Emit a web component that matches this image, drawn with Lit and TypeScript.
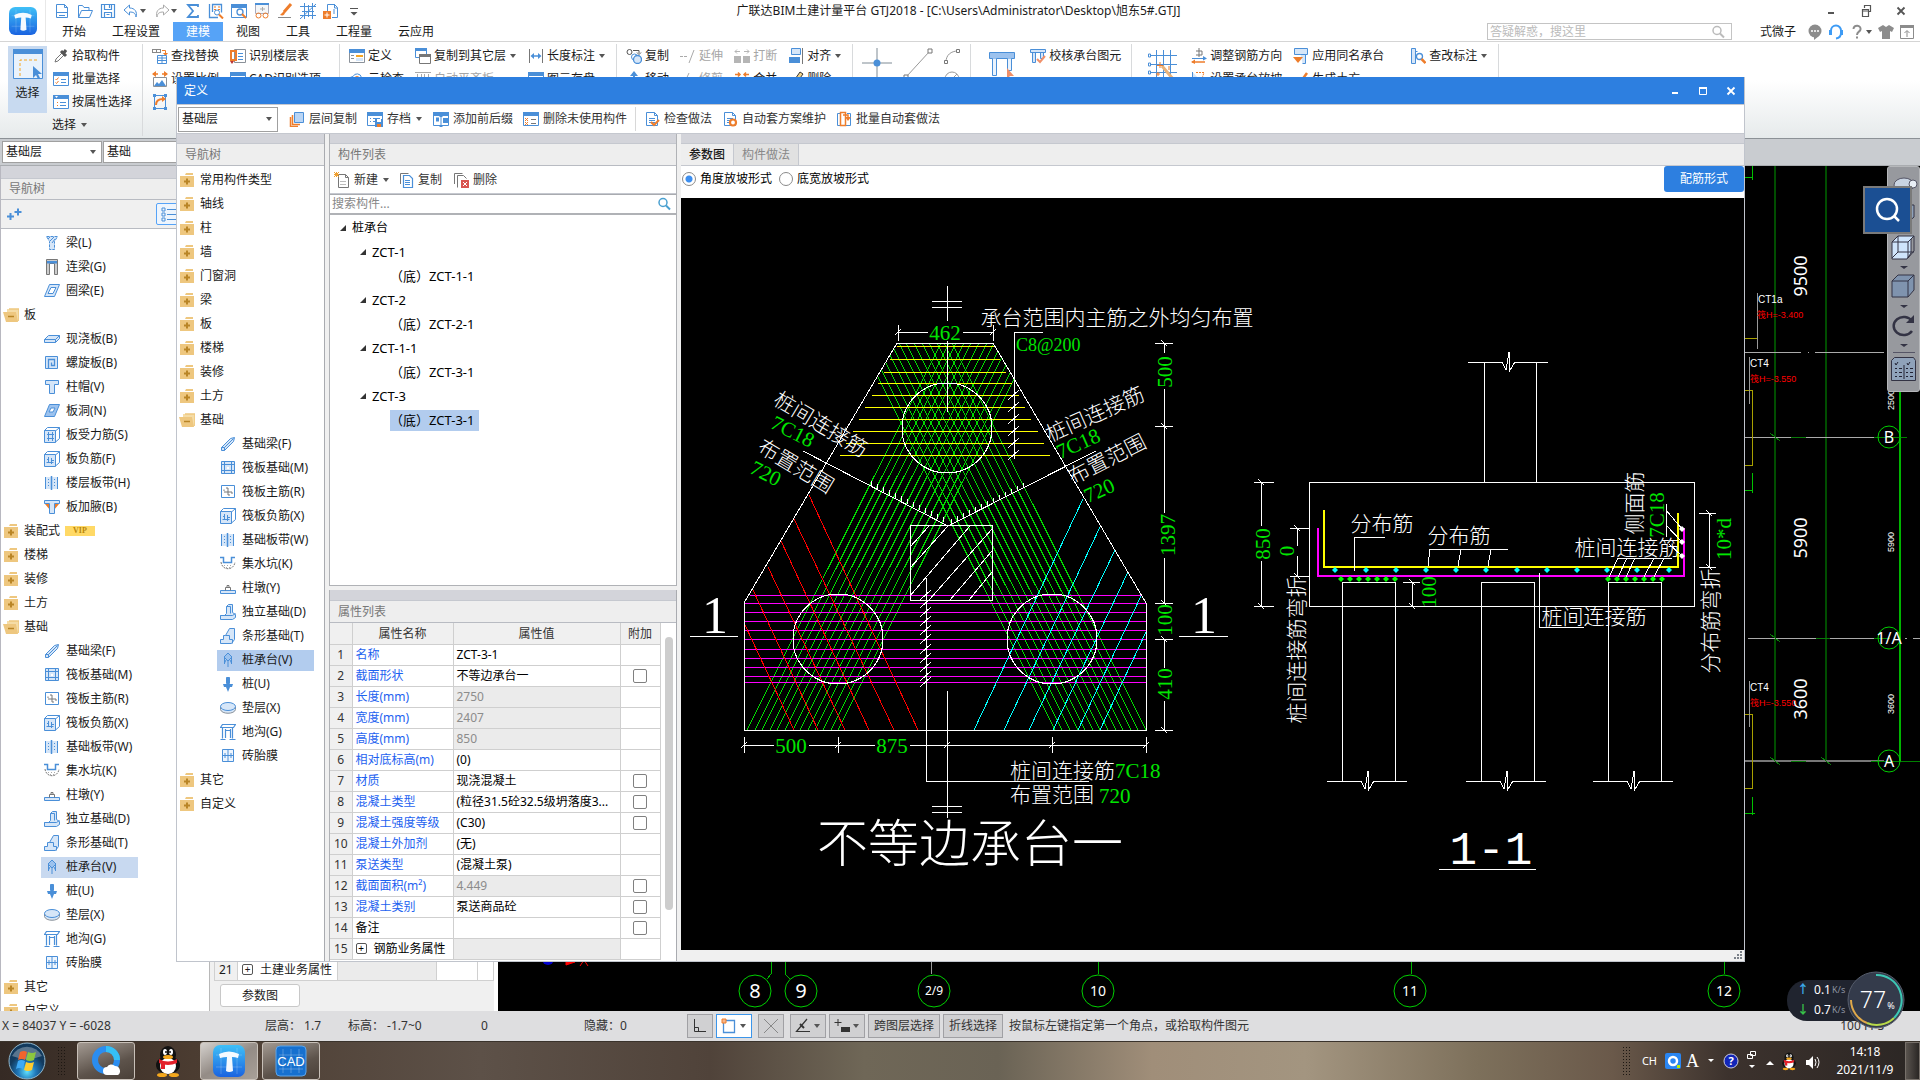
import { LitElement, html, svg, css, nothing } from "lit";
import { customElement } from "lit/decorators.js";
import { classMap } from "lit/directives/class-map.js";

const B = "#4a8fd8";
const L = "#d6e6f8";
const O = "#ee7d2b";
const G = "#8a9199";

/* ---------- icon set, 16 x 16 ---------- */
const win = svg`<path d="M.5 1.5h15v13H.5z" fill="#fff" stroke="#4a8fd8"/><path d="M0 1h16v4H0z" fill="#4a8fd8"/>`;
const folder = svg`<path d="M1 4h14v11H1z" fill="#eec77f"/><path d="M7 1h7v2H6z" fill="#eec77f"/>`;
const box3d = svg`<path d="M.5 3.5h11v12H.5z" fill=${L} stroke=${B}/><path d="M.5 3.5l3-3h12v11l-4 3.500v-11l4-3.500" fill="none" stroke=${B}/>`;
const page = svg`<path d="M2.500 1.500h8l3 3v10h-11z" fill="#fff" stroke="#4a8fd8"/><path d="M10.500 1.500v3h3M5 7.500h6M5 9.500h6M5 11.500h6" fill="none" stroke="#4a8fd8"/>`;
const cap = svg`<path d="M1.500 1.500h13v4h-4v9h-5v-9h-4z" fill=${L} stroke=${B}/>`;

const ICONS: Record<string, unknown> = {
  newdoc: svg`<path d="M2.500 1.500h8l3 3v10h-11zM10.500 1.500v3h3M2.500 9.500h11" fill="none" stroke=${B}/><path d="M5 12.500h6" stroke=${B}/>`,
  open: svg`<path d="M1.500 14.500v-12h4l1.500 2h5v3M1.500 14.500l3-7h11l-3 7z" fill="none" stroke=${B}/>`,
  save: svg`<path d="M1.500 1.500h13v13h-13zM4.500 1.500v5h7v-5M4.500 14.500v-5h7v5M9.500 2v3M6.500 11.500h3" fill="none" stroke=${B} stroke-width="1.200"/>`,
  undo: svg`<path d="M6.500 2L1 7l5.500 5V9c4 0 6 1 6.500 5 1.500-5-1-9-6.500-9z" fill="none" stroke=${B}/>`,
  redo: svg`<path d="M9.500 2L15 7l-5.500 5V9c-4 0-6 1-6.500 5C1.500 9 4 5 9.500 5z" fill="none" stroke="#aaa"/>`,
  sigma: svg`<path d="M13 4V2H3l5 6-5 6h10v-2" fill="none" stroke=${B} stroke-width="1.800"/>`,
  chartfind: svg`<path d="M1.500 1v13.500H10M4.500 9V1.500h9v8" fill="none" stroke=${B} stroke-width="1.300"/><path d="M6 4h2M10 4h2M6 6.500h2M10 6.500h2" stroke=${O} stroke-width="1.200"/><circle cx="9" cy="9.500" r="2.500" fill="#fff" stroke=${B}/><path d="M11 11.500l4 4" stroke=${O} stroke-width="2"/>`,
  winfind: svg`${win}<circle cx="9" cy="9" r="3" fill="#fff" stroke=${B} stroke-width="1.300"/><path d="M11 11l4 4" stroke=${O} stroke-width="2"/>`,
  glasses: svg`<path d="M1.500.500h13v10h-13z" fill="#f4f6f8" stroke="#aab"/><path d="M1 0h14v2H1z" fill=${B}/><path d="M6 6h5M8.500 4v4" stroke="#aaa"/><circle cx="4.500" cy="12.500" r="2.500" fill="none" stroke=${O}/><circle cx="11.500" cy="12.500" r="2.500" fill="none" stroke=${O}/>`,
  brush: svg`<path d="M14 1L7 9" stroke=${O} stroke-width="3"/><path d="M7 8l-4 4c3 1 5 0 5-3z" fill=${O}/><path d="M1 14.500h13" stroke="#888"/>`,
  mesh: svg`<path d="M4.500 0v16M12.500 0v16M0 3.500h16M0 12.500h16M8.500 2v12M2 8.500h12M0 16L16 1" fill="none" stroke=${B}/>`,
  calcpage: svg`<path d="M4.500 8V1.500h7l3 3v10H9" fill="none" stroke=${B}/><path d="M11.500 1v4h3" fill="none" stroke=${B}/><path d="M0 8h8v8H0z" fill=${O}/><path d="M4 9.500v5M1.500 12h5" stroke="#fff"/><path d="M11 6v5" stroke=${B}/>`,
  overflow: svg`<path d="M4 5.500h8" stroke="#555"/><path d="M4.500 9h7L8 12.500z" fill="#555"/>`,
  dropper: svg`<path d="M2 14l1-3 6-6 2 2-6 6z" fill="#fff" stroke="#777"/><path d="M8 3l5 5M10 6l3-4" stroke="#555" stroke-width="3"/>`,
  batch: svg`${win}<path d="M2.500 8l1 1 2-2.500M2.500 11.500l1 1 2-2.500" fill="none" stroke=${O}/><path d="M8 8.500h5M8 11.500h5" stroke=${B}/>`,
  byattr: svg`${win}<path d="M2 2l3 0-1.500 2z" fill="#fff"/><path d="M4 8.500h1M4 11.500h1" stroke=${O}/><path d="M7 8.500h6M7 11.500h6" stroke=${B}/>`,
  replace: svg`<path d="M0 1.500h9M0 4.500h9M.500 1v4M4.500 1v4M8.500 1v4" stroke="#888" fill="none"/><path d="M10 2.500h3.500V6" fill="none" stroke=${O}/><path d="M11 5h5l-2.500 3z" fill=${O}/><path d="M5.500 7.500h9v8h-9zM5.500 10h9M5.500 12.500h9M10 7.500v8" fill="#fff" stroke=${B}/>`,
  scale: svg`<path d="M1 3h5M10 3h5" stroke=${O} stroke-width="1.500"/><path d="M4 0L0 3l4 3zM12 0l4 3-4 3z" fill=${O}/><path d="M1.500 6.500h13v9h-13z" fill="#fff" stroke=${G}/><path d="M2 15l3-4 2 2 3-4 4 6z" fill=${B}/>`,
  rotate: svg`<path d="M2.500 1.500h11v13h-11z" fill="none" stroke=${B}/><path d="M1 0h3v3H1zM12 0h3v3h-3zM1 13h3v3H1zM12 13h3v3h-3z" fill=${B}/><path d="M4 11c0-5 4-6 7-6" fill="none" stroke=${O} stroke-width="2"/><path d="M10 2l4 3-4 3z" fill=${O}/>`,
  floortab: svg`<path d="M4.500 1.500h11v13h-11z" fill="#fff" stroke=${G}/><path d="M1 3h5v9H1z" fill="none" stroke=${O} stroke-width="2"/><path d="M8 5.500h5M8 8.500h5M8 11.500h5" stroke=${B}/><path d="M0 13l4 0-2 3z" fill="#b33"/>`,
  cadopt: svg`${win}<path d="M3 8.500h10M3 11.500h10" stroke=${O}/>`,
  define: svg`<path d="M.5 1.500h15v13H.5z" fill="#fff" stroke=${G}/><path d="M0 1h16v4H0z" fill=${B}/><path d="M7 7h7v2H7z" fill="#f5a623"/><path d="M7 10h7v3H7z" fill=${L}/><path d="M2 7.500h3M2 10.500h3" stroke=${G}/>`,
  cloudcheck: svg`<path d="M4 12.500a3.500 3.500 0 010-7 4.500 4.500 0 018.500 1 3 3 0 010 6z" fill="#fff" stroke=${B}/><circle cx="8" cy="8" r="2.500" fill="none" stroke=${O}/>`,
  copyfloor: svg`<path d="M.5.5h11v9H.5z" fill="#fff" stroke=${B}/><path d="M0 0h12v3H0z" fill=${B}/><path d="M4.500 6.500h11v9h-11z" fill="#fff" stroke="#777"/><path d="M4 6h12v3H4z" fill="#777"/>`,
  flush: svg`<path d="M0 1.500h16M2.500 3v11h4V3M9.500 3v11h4V3" fill="none" stroke="#aaa"/>`,
  length: svg`<path d="M1.500 1v14M14.500 1v14" stroke="#777"/><path d="M4 8h8" stroke=${B} stroke-width="1.500"/><path d="M6 5L2.500 8 6 11zM10 5l3.500 3-3.500 3z" fill=${B}/>`,
  store: svg`${win}<path d="M6 8h8v7H6z" fill=${B}/><path d="M8 8v3h4V8" fill="#fff"/>`,
  copy2: svg`<circle cx="3.500" cy="4" r="2.500" fill="#fff" stroke="#555"/><path d="M7 2.500h6V5M11 4.500l2 2 2-2" fill="none" stroke="#555"/><circle cx="8.500" cy="9" r="3" fill="#fff" stroke=${B}/><circle cx="11.500" cy="11.500" r="4" fill=${L} stroke=${B} stroke-width="1.300"/>`,
  move: svg`<path d="M8 1v9" stroke=${B} stroke-width="2"/><path d="M4 5l4-5 4 5z" fill=${B}/><path d="M1.500 8v6.500h13V8" fill="none" stroke=${B}/>`,
  extend: svg`<path d="M0 8.500h8" stroke="#aaa" stroke-dasharray="3 1"/><path d="M14 2L9 15" stroke="#aaa"/>`,
  trim: svg`<path d="M9 2L3 15M9 9l6 1" stroke="#aaa"/>`,
  break: svg`<path d="M0 8h7v7H0zM9 8h7v7H9z" fill="#b5b5b5"/><path d="M1 3.500h5M10 3.500h5M3 1.500l-2 2 2 2M13 1.500l2 2-2 2" fill="none" stroke="#b5b5b5"/>`,
  merge: svg`<path d="M1 3.500h5M10 3.500h5M4 1.500l2 2-2 2M12 1.500l-2 2 2 2" fill="none" stroke=${O} stroke-width="1.500"/><path d="M0 8h16v7H0z" fill="#777"/>`,
  align: svg`<path d="M3.500.500h9v6h-9z" fill=${L} stroke=${B}/><path d="M1 9h11v6H1z" fill=${B}/><path d="M14.500 0v16" stroke="#777"/>`,
  erase: svg`<path d="M3 14L12 1l3 2-8 11z" fill="#f4d58a" stroke="#333"/>`,
  checkcap: svg`<path d="M.5 1.500h15v3H.5zM2.500 4.500v10h3v-10M10.500 4.500v6h3v-6" fill=${L} stroke=${B}/><path d="M7 11l3 3 5-6" fill="none" stroke="#f0906a" stroke-width="2"/>`,
  rebardir: svg`<path d="M8 0v9M5 3h6v4H5" fill="none" stroke="#777"/><path d="M1 10.500h14" stroke=${B}/><path d="M1 14h13" stroke=${O} stroke-width="1.500"/><path d="M4 11.500L0 14l4 2z" fill=${O}/><path d="M12 8l4 2.500-4 2" fill=${B}/>`,
  slope: svg`<path d="M1.500 1v6h4v8h9" fill=${L} stroke=${B}/><path d="M5 1.500h8l-2 6" fill="none" stroke=${O} stroke-dasharray="2 1"/>`,
  samecap: svg`<path d="M1.500.500h13v6h-13z" fill=${L} stroke=${B}/><path d="M7.500 6.500h5v9h-3" fill=${L} stroke=${B}/><path d="M0 9h10l-5 6z" fill=${O}/>`,
  earth: svg`<path d="M2 8l4 5 8-11" fill="none" stroke=${O} stroke-width="2.500"/>`,
  annotate: svg`<path d="M1.500.500h4v15h-4zM5.500 3.500h2" fill=${L} stroke=${B}/><circle cx="9.500" cy="8.500" r="3" fill="#fff" stroke=${B} stroke-width="1.300"/><path d="M11.500 11l4 4" stroke=${O} stroke-width="2.500"/>`,
  copyfl: svg`<path d="M5.500 1.500h9v10h-9z" fill="#b9d5f5" stroke=${B}/><path d="M3.500 4v9.500H11M1.500 6v9.500H9" fill="none" stroke=${O} stroke-width="1.500"/>`,
  archive: svg`${win}<path d="M3 7.500h1M6 7.500h7M3 10.500h1M6 10.500h4" stroke=${B}/><path d="M8 8h8v8H8z" fill=${B}/><path d="M10 8h4v3h-4z" fill="#fff"/><path d="M10 13h4v3h-4z" fill=${O}/>`,
  prefix: svg`${win}<path d="M3 6.500h3v4H3zM10 7h5v5h-5z" fill=${B}/><path d="M8 5v11M6.500 5.500h3M6.500 15.500h3" stroke=${B}/>`,
  delunused: svg`${win}<path d="M2 7l3 3M5 7l-3 3M2 11l3 3M5 11l-3 3" stroke=${O}/><path d="M8 8.500h5M8 12.500h5" stroke="#777"/>`,
  checkdo: svg`${page}<path d="M7 11l3 3 5-5" fill="none" stroke=${O} stroke-width="2"/>`,
  autoset: svg`${page}<circle cx="11" cy="11.500" r="3" fill="#fff" stroke=${O} stroke-width="2.200"/>`,
  batchdo: svg`<path d="M5.500 2.500h-4v12h4M11 2.500h3.500v12H9" fill="none" stroke=${B}/><path d="M4.500 1.500h5v13h-5z" fill="#fff" stroke=${O} stroke-width="1.500"/><path d="M7 4h5v3" fill="none" stroke=${O} stroke-width="1.500"/><path d="M9 6h6l-3 4z" fill=${O}/>`,
  create: svg`<path d="M4.500 2.500h7l3 3v10h-10z" fill="#fff" stroke="#777"/><path d="M11.500 2.500v3h3" fill="none" stroke="#777"/><path d="M6 9.500h6M6 12.500h6" stroke="#bbb"/><path d="M0 0l5 5M5 0L0 5M2.500 0v5M0 2.500h5" stroke="#f0a030"/>`,
  copy: svg`<path d="M2.500 12V1.500h8" fill="none" stroke="#777"/><path d="M5.500 3.500h6l3 3v9h-9z" fill="#fff" stroke=${B} stroke-width="1.200"/><path d="M7 8.500h5M7 10.500h5M7 12.500h5" stroke=${B}/>`,
  remove: svg`<path d="M1.500 12V1.500h8M4.500 15.500v-12h6l3 3" fill="none" stroke="#777"/><path d="M8 8h8v8H8z" fill="#d9534f"/><path d="M10 10l4 4M14 10l-4 4" stroke="#fff"/>`,
  plusdir: svg`${folder}<path d="M8 6.500v6M5 9.500h6" stroke="#b98526" stroke-width="2"/>`,
  minusdir: svg`<path d="M4 2h12v12H4z" fill="#f5dca6"/><path d="M6 2h10v12" fill="none" stroke="#eec77f" stroke-width="1.500"/><path d="M0 5h13l2 10H3z" fill="#eec77f"/><path d="M5 9.500h6" stroke="#b98526" stroke-width="1.500"/>`,
  beam: svg`<path d="M2.500 1.500h11l-3 5v8h-5v-8z" fill=${L} stroke=${B} stroke-dasharray="3 1"/><path d="M4 4L6 2M6 6l4-4M8 8l3-4" stroke=${B}/>`,
  linkbeam: svg`<path d="M2.500 15.500V.500h11v15h-3v-11h-5v11z" fill="#ccc" stroke="#777"/><path d="M3 2h10v2.500H3z" fill=${B}/>`,
  ring: svg`<path d="M5.500 1.500h10l-5 12H.500z" fill=${L} stroke=${B}/><path d="M7 4.500h5l-3 6H4z" fill="#fff" stroke=${B}/>`,
  slab: svg`<path d="M.5 8.500l4-4h11v3l-4 4H.500z" fill=${L} stroke=${B}/><path d="M.5 8.500h11l4-4M11.500 8.500v3" fill="none" stroke=${B}/>`,
  spiral: svg`<path d="M1.500 1.500h12v12h-12z" fill=${L} stroke=${B}/><path d="M4.500 13V4.500h6v6h-3v-3" fill="none" stroke=${B} stroke-width="1.300"/>`,
  colcap: cap,
  hole: svg`<path d="M5.500 1.500h10l-5 12H.500z" fill="#9cc2ee" stroke=${B}/><path d="M7 5h4l-2 4H5z" fill="#fff" stroke=${B}/>`,
  rebar: svg`${box3d}<path d="M3 7.500h7M3 11.500h7M4.500 5v9M8.500 5v9" stroke=${B}/>`,
  negbar: svg`${box3d}<path d="M2.500 11.500h7M4.500 6v6M7.500 7v6M3 8.500h2M7 9.500h3" fill="none" stroke=${B}/>`,
  strip: svg`<path d="M1 2h13v12H1z" fill=${L}/><path d="M1.500 2v12M13.500 2v12" stroke=${B}/><path d="M7.500 1v14" stroke=${B} stroke-width="1.500"/><path d="M4.500 4v9M10.500 4v9" stroke=${B} stroke-dasharray="1 2"/>`,
  haunch: svg`<path d="M1 5l4 0 1 6zM15 5l-4 0-1 6z" fill=${O}/><path d="M.5 1.500h15v3h-5v10h-5v-10h-5z" fill=${L} stroke=${B}/>`,
  fbeam: svg`<path d="M1.500 11.500l9-9 4-1-1 4-9 9h-3z" fill=${L} stroke=${B}/><path d="M1.500 11.500h3v3M4.500 11.500l9-9" fill="none" stroke=${B}/>`,
  raft: svg`<path d="M1.500 1.500h13v12h-13zM4.500 4.500h7v6h-7zM1 4.500h14M1 10.500h14M4.500 1v13M11.500 1v13" fill=${L} stroke=${B}/><path d="M7 7h2v2H7z" fill="#fff"/>`,
  raftbar: svg`<path d="M1.500 1.500h13v12h-13z" fill="#fff" stroke=${B}/><path d="M4 8h8M8 4v7M6 4h2M8 11h2M4 7v-1.500M12 8v2" stroke="#777" fill="none"/>`,
  sump: svg`<path d="M0 1.500h3.500v5h8v-5H15" fill="none" stroke=${B} stroke-width="1.500"/><path d="M1 6c1 9 13 9 14 0" fill="none" stroke="#777" stroke-dasharray="2 1"/><path d="M4 9.500h7M6 11.500h4" stroke="#aaa" stroke-dasharray="1 2"/>`,
  pier: svg`<path d="M.5 10.500h15v3H.500z" fill=${L} stroke=${B}/><path d="M5.500 10.500v-3h5v3M7 7V5.500h2V7" fill="none" stroke="#777"/>`,
  isolated: svg`<path d="M6.500 9.500v-7l2-2h4v8l3 2v3l-3 2H.500v-4h4z" fill=${L} stroke=${B}/><path d="M.5 11.500h12l3-2M6.500 2.500h4v7" fill="none" stroke=${B}/>`,
  stripf: svg`<path d="M.5 15.500v-4h3v-4h2l4-7h5v11l-3 4z" fill=${L} stroke=${B}/><path d="M5.500 7.500h4v4h3v4" fill="none" stroke=${B}/>`,
  pilecap: svg`<path d="M8 1l4 4-4 4-4-4z" fill="#9cc2ee" stroke=${B}/><path d="M4.500 6v6M8 9v6M11.500 6v6M6 8l-1.500 3M10 8l1.500 3" stroke=${B}/>`,
  pile: svg`<path d="M6.500 1.500h3v6h-3z" fill=${B} stroke=${B}/><path d="M3 8h10l-1 3H4z" fill=${B}/><path d="M6 11h4l-2 5z" fill=${B}/>`,
  cushion: svg`<path d="M.5 6.500v3c1 5 14 5 15 0v-3" fill=${L} stroke=${G}/><ellipse cx="8" cy="6.500" rx="7.500" ry="4" fill=${L} stroke=${B}/>`,
  trench: svg`<path d="M2.500.500h13l-2 3h-13zM2.500 3.500v11M12.500 3.500v11M5.500 5v9M10.500 5v9M.500 15.500h5M9.500 15.500h6M5 6.500h5" fill="none" stroke=${B} stroke-width="1.200"/>`,
  brick: svg`<path d="M2.500 1.500h11v12h-11z" fill="#eef5fd" stroke=${B}/><path d="M8 1.500v12M2.500 7.500h11M5 5v5M11 5v5" stroke=${B}/>`,
  search: svg`<circle cx="7" cy="6.500" r="4" fill="none" stroke="currentColor" stroke-width="1.500"/><path d="M10 9.500l4 4" stroke="currentColor" stroke-width="2"/>`,
  pluses: svg`<path d="M3.500 7v7M0 10.500h7M11 2.500v7M7.500 6h7" stroke=${B} stroke-width="2"/>`,
  listview: svg`<path d="M1 2h3v3H1zM1 7h3v3H1zM1 12h3v3H1z" fill="none" stroke=${B}/><path d="M6 3.500h9M6 8.500h9M6 13.500h9" stroke=${B}/>`,
  ortho: svg`<path d="M2.500 1v12.500H14M2.500 9.500h4v4" fill="none" stroke="#333"/>`,
  snaprect: svg`<path d="M2.500 2.500h11v12h-11z" fill="#fff" stroke=${B} stroke-width="1.300"/><path d="M1 1h4v4H1z" fill="#f6b58a" stroke=${O}/>`,
  cross: svg`<path d="M1 1l14 14M15 1L1 15" stroke="#888"/>`,
  angle: svg`<path d="M15 13.500H1.500L12 1" fill="none" stroke="#333" stroke-width="1.200"/><path d="M5 6l4 4" stroke="#333" stroke-width="2"/>`,
  plusbar: svg`<path d="M4 1v7M.500 4.500h7" stroke="#333"/><path d="M7 9h9v5H7z" fill="#333"/>`,
  chat: svg`<circle cx="8" cy="7" r="6.500" fill="#8c8c8c"/><path d="M7 12h5l-5 4z" fill="#8c8c8c"/><path d="M4 7h2M7 7h2M10 7h2" stroke="#fff" stroke-width="1.500"/>`,
  headset: svg`<path d="M3 8V6.500a5 5 0 0110 0V9c0 3-2 5-5 5.500" fill="none" stroke="#3d9bf5" stroke-width="2"/><path d="M1 6h3v5H1zM12 6h3v5h-3z" fill="#3d9bf5"/>`,
  help: svg`<path d="M4.500 5c0-5 8-4 7 .500C11 8 8 7.500 8 11" fill="none" stroke="#8c8c8c" stroke-width="2"/><path d="M7 12.500h2v2H7z" fill="#8c8c8c"/>`,
  shirt: svg`<path d="M5 1l3 2 3-2 5 3-2 4-2-1v8H4V7L2 8 0 4z" fill="#8c8c8c"/>`,
  collapse: svg`<path d="M1.500 1.500h13v13h-13z" fill="#fff" stroke="#8c8c8c"/><path d="M1 1h14v3H1z" fill="#8c8c8c"/><path d="M8 13V7M5.500 9L8 6.500 10.500 9" fill="none" stroke="#8c8c8c"/>`,
  min: svg`<path d="M5 10h6" stroke="currentColor" stroke-width="2"/>`,
  max: svg`<path d="M4.500 4.500h7v7h-7z" fill="none" stroke="currentColor"/><path d="M4 5h8" stroke="currentColor" stroke-width="2"/>`,
  restore: svg`<path d="M6.500 5V2.500h6v6H10M4.500 6.500h6v7h-6zM4 8h7" fill="none" stroke="currentColor" stroke-width="1.200"/>`,
  close: svg`<path d="M4.500 4.500l7 7M11.500 4.500l-7 7" stroke="currentColor" stroke-width="1.800"/>`,
};

const icon = (name: string, cls = "") =>
  html`<svg class="ic ${cls}" viewBox="0 0 16 16" aria-hidden="true">${ICONS[name]}</svg>`;
const caret = html`<svg class="caret" viewBox="0 0 8 8" aria-hidden="true"><path d="M1 2h6L4 6z" fill="#555"/></svg>`;

/* ---------- data ---------- */
type Cmd = [string, string, string?];
const G1: Cmd[][] = [[["dropper", "拾取构件"], ["batch", "批量选择"], ["byattr", "按属性选择"]]];
const G2: Cmd[][] = [
  [["replace", "查找替换"], ["scale", "设置比例"], ["rotate", ""]],
  [["floortab", "识别楼层表"], ["cadopt", "CAD识别选项"]],
];
const G3: Cmd[][] = [
  [["define", "定义"], ["cloudcheck", "云检查"]],
  [["copyfloor", "复制到其它层", "v"], ["flush", "自动平齐板", "off"]],
  [["length", "长度标注", "v"], ["store", "图元存盘"]],
];
const G4: Cmd[][] = [
  [["copy2", "复制"], ["move", "移动"]],
  [["extend", "延伸", "off"], ["trim", "修剪", "off"]],
  [["break", "打断", "off"], ["merge", "合并"]],
  [["align", "对齐", "v"], ["erase", "删除"]],
];
const G7: Cmd[][] = [
  [["rebardir", "调整钢筋方向"], ["slope", "设置承台放坡"]],
  [["samecap", "应用同名承台"], ["earth", "生成土方"]],
];

const FOUND: [string, string][] = [
  ["fbeam", "基础梁(F)"], ["raft", "筏板基础(M)"], ["raftbar", "筏板主筋(R)"], ["negbar", "筏板负筋(X)"],
  ["strip", "基础板带(W)"], ["sump", "集水坑(K)"], ["pier", "柱墩(Y)"], ["isolated", "独立基础(D)"],
  ["stripf", "条形基础(T)"], ["pilecap", "桩承台(V)"], ["pile", "桩(U)"], ["cushion", "垫层(X)"],
  ["trench", "地沟(G)"], ["brick", "砖胎膜"],
];
const dir = (t: string): [string, string] => ["plusdir", t];
const LEFT_TREE: [string, string][] = [
  ["beam", "梁(L)"], ["linkbeam", "连梁(G)"], ["ring", "圈梁(E)"], ["minusdir", "板"],
  ["slab", "现浇板(B)"], ["spiral", "螺旋板(B)"], ["colcap", "柱帽(V)"], ["hole", "板洞(N)"],
  ["rebar", "板受力筋(S)"], ["negbar", "板负筋(F)"], ["strip", "楼层板带(H)"], ["haunch", "板加腋(B)"],
  dir("装配式"), dir("楼梯"), dir("装修"), dir("土方"), ["minusdir", "基础"], ...FOUND, dir("其它"), dir("自定义"),
];
const DLG_TREE: [string, string][] = [
  ...["常用构件类型", "轴线", "柱", "墙", "门窗洞", "梁", "板", "楼梯", "装修", "土方"].map(dir),
  ["minusdir", "基础"], ...FOUND, dir("其它"), dir("自定义"),
];
const COMPS: [number, string][] = [
  [1, "桩承台"], [2, "ZCT-1"], [3, "（底）ZCT-1-1"], [2, "ZCT-2"], [3, "（底）ZCT-2-1"],
  [2, "ZCT-1-1"], [3, "（底）ZCT-3-1"], [2, "ZCT-3"], [3, "（底）ZCT-3-1"],
];
/* name, value, flags: c = tick box, g = read-only, k = black name, p = expander */
const PROPS: [string, string, string][] = [
  ["名称", "ZCT-3-1", ""], ["截面形状", "不等边承台一", "c"], ["长度(mm)", "2750", "g"], ["宽度(mm)", "2407", "g"],
  ["高度(mm)", "850", "g"], ["相对底标高(m)", "(0)", ""], ["材质", "现浇混凝土", "c"],
  ["混凝土类型", "(粒径31.5砼32.5级坍落度3...", "c"], ["混凝土强度等级", "(C30)", "c"], ["混凝土外加剂", "(无)", ""],
  ["泵送类型", "(混凝土泵)", ""], ["截面面积(m²)", "4.449", "gc"], ["混凝土类别", "泵送商品砼", "c"],
  ["备注", "", "kc"], ["钢筋业务属性", "", "kgp"],
];

/* ---------- drawing helpers ---------- */
const seg = (d: string, stroke = "#fff", w = 1) =>
  svg`<path d=${d} stroke=${stroke} stroke-width=${w} fill="none" shape-rendering="crispEdges"/>`;
const label = (x: number, y: number, t: string, size = 21, rot = 0, fill = "#fff", anchor = "middle", cls = "cad") =>
  svg`<text class=${cls} x=${x} y=${y} dy="0.36em" font-size=${size} fill=${fill} text-anchor=${anchor}
    transform=${rot ? `rotate(${rot} ${x} ${y})` : nothing}>${t}</text>`;
const GR = "#00e600";
const range = (n: number) => Array.from({ length: n }, (_, i) => i);

const YELLOW = [
  [346, 897, 995], [359, 890, 1000], [372, 884, 1006], [383, 878, 1012], [395, 872, 1019],
  [407, 865, 1025], [419, 859, 1031], [431, 853, 1038], [443, 846, 1044], [455, 840, 1050],
];
const MAG = [595, 603, 612, 621, 630, 639, 649, 658, 667, 676, 682];

const planDrawing = () => svg`
  <clipPath id="capshape"><path d="M897 343H993L1146 603V730H744V603z"/></clipPath>
  <g clip-path="url(#capshape)">
    ${range(13).map((i) => seg(`M${747 + Math.round(i * 7.6)} 730l194 -387`, "#00d800"))}
    ${range(13).map((i) => seg(`M${1146 - Math.round(i * 7.6)} 730l-194 -387`, "#00d800"))}
  </g>
  ${YELLOW.map(([y, a, b]) => seg(`M${a} ${y}H${b}`, "#ff0"))}
  ${MAG.map((y, i) => seg(i ? `M744 ${y}H1146` : `M750 ${y}H1141`, "#f0f"))}
  ${seg("M809 495L918 730M794 519L894 730M781 541L869 730M768 567L845 730M753 590L818 730M745 625L794 730", "#f00")}
  ${seg("M1083 499L974 730M1100 527L1004 730M1115 550L1029 730M1128 572L1053 730M1141 596L1078 730M1146 632L1100 730", "#0ff")}
  ${seg("M897 343H993L1146 603V730H744V603z")}
  ${[[947, 428], [838, 639], [1052, 639]].map(([x, y]) => svg`<circle cx=${x} cy=${y} r="45" fill="none" stroke="#fff" shape-rendering="crispEdges"/>`)}
  ${seg("M910 525H992V600H910zM910 547L929 526M910 568L948 526M910 596L970 526M929 600L992 529M950 600L992 551M969 600L992 572")}
  ${seg("M947 286V321M932 301H962M932 307H962M947 341V412M947 691V818M932 806H962M932 812H962")}
  ${seg("M898 332H928M963 332H993M898 325V341M993 325V341M895 335l6 -6M990 335l6 -6")}
  ${seg("M1043 332H1014V459M926 578V781H1089M803 451L948 526L1096 451")}
  ${YELLOW.slice(4).map(([y]) => seg(`M1008 ${y + 5}l11 -10`))}
  ${MAG.map((y) => seg(`M920 ${y + 5}l11 -10`))}
  ${range(13).map((i) => seg(`M${871 + i * 6} ${486 + i * 3}v-5M${1023 - i * 6} ${488 + i * 3}v-5`))}
  ${seg("M1164 343V353M1164 389V513M1164 558V604M1164 639V668M1164 701V730M1155 343H1173M1155 426H1173M1155 603H1173M1155 639H1173M1155 730H1173")}
  ${[343, 426, 603, 639, 730].map((y) => seg(`M1161 ${y - 3}l6 6`))}
  ${seg("M744 745H774M809 745H875M910 745H1146")}
  ${[744, 838, 947, 1052, 1146].map((x) => seg(`M${x} 737V753M${x - 3} 748l6 -6`))}
  ${seg("M690 636H738M1179 636H1228")}
  ${label(945, 332, "462", 21, 0, GR)}
  ${label(1117, 317, "承台范围内主筋之外均匀布置")}
  ${label(1016, 345, "C8@200", 18, 0, GR, "start")}
  ${label(821, 424, "桩间连接筋", 21, 31)}${label(793, 431, "7C18", 21, 27, GR)}
  ${label(796, 466, "布置范围", 21, 31)}${label(766, 473, "720", 21, 27, GR)}
  ${label(1095, 414, "桩间连接筋", 21, -24)}${label(1078, 443, "7C18", 21, -24, GR)}
  ${label(1107, 459, "布置范围", 21, -27)}${label(1099, 490, "720", 21, -24, GR)}
  ${label(1164, 372, "500", 21, -90, GR)}${label(1167, 535, "1397", 21, -90, GR)}
  ${label(1164, 620, "100", 21, -90, GR)}${label(1164, 684, "410", 21, -90, GR)}
  ${label(791, 745, "500", 21, 0, GR)}${label(892, 745, "875", 21, 0, GR)}
  ${label(715, 614, "1", 52)}${label(1204, 614, "1", 52)}
  ${label(1010, 770, "桩间连接筋", 21, 0, "#fff", "start")}${label(1115, 770, "7C18", 21, 0, GR, "start")}
  ${label(1010, 794, "布置范围", 21, 0, "#fff", "start")}${label(1099, 795, "720", 21, 0, GR, "start")}
  ${label(970, 844, "不等边承台一", 51)}`;

const breakLine = (x: number, y: number) => seg(`M${x - 40} ${y}H${x - 6}l4 8l3 -18v20l6 -10H${x + 40}`);
const diamond = (x: number, y: number, c: string) => svg`<path d=${`M${x - 3} ${y}l3 -3l3 3l-3 3z`} fill=${c}/>`;

const sectionDrawing = () => svg`
  ${seg("M1484 362V482M1536 362V482M1309 482H1694V606H1309z")}
  ${breakLine(1508, 362)}
  ${seg("M1342 781V582H1395V781M1481 781V582H1534V781M1608 781V582H1661V781")}
  ${breakLine(1367, 781)}${breakLine(1506, 781)}${breakLine(1633, 781)}
  ${seg("M1324 510V567H1678V513", "#ff0", 2)}
  ${seg("M1318 528V576H1684V528", "#f0f", 2)}
  ${[1335, 1366, 1396, 1426, 1456, 1486, 1517, 1547, 1577, 1607, 1637, 1669].map((x) => diamond(x, 570, "#0ff"))}
  ${range(7).map((i) => [diamond(1341 + i * 9, 579, "#0f0"), diamond(1608 + i * 9, 579, "#0f0")])}
  ${[529, 542, 556].map((y) => diamond(1682, y, "#fff"))}
  ${seg("M1261 482V526M1261 561V606M1254 482H1274M1254 606H1274M1258 479l6 6M1258 603l6 6")}
  ${seg("M1297 528V546M1297 556V576M1290 528H1309M1290 576H1309M1294 525l6 6M1294 573l6 6")}
  ${seg("M1412 582V606M1403 582H1420M1403 606H1420M1409 579l6 6M1409 603l6 6")}
  ${seg("M1709 513V567M1699 513H1716M1699 567H1716M1706 510l6 6M1706 564l6 6")}
  ${seg("M1354 571V537H1385M1428 566L1430 549H1508M1458 566L1461 549M1488 566L1491 549")}
  ${seg("M1666 504V537M1666 510L1682 529M1666 525L1682 542M1669 544L1682 556")}
  ${seg("M1609 577L1618 558H1672M1618 577L1627 558M1626 577L1635 558M1644 577L1654 558M1654 577L1664 558")}
  ${seg("M1539 573V627H1584M1439 869H1536")}
  ${label(1262, 544, "850", 21, -90, GR)}${label(1286, 551, "0", 21, -90, GR)}
  ${label(1428, 592, "100", 21, -90, GR)}${label(1656, 515, "7C18", 21, -90, GR)}${label(1723, 539, "10*d", 21, -90, GR)}
  ${label(1296, 650, "桩间连接筋弯折", 21, -90)}${label(1710, 621, "分布筋弯折", 21, -90)}
  ${label(1634, 503, "侧面筋", 21, -90)}
  ${label(1382, 523, "分布筋")}${label(1459, 535, "分布筋")}
  ${label(1627, 547, "桩间连接筋")}${label(1594, 616, "桩间连接筋")}
  ${label(1491, 847, "1-1", 46, 0, "#fff", "middle", "cadmono")}`;

const axisBubble = (x: number, y: number, r: number, t: string, size: number) => svg`
  <circle cx=${x} cy=${y} r=${r} fill="none" stroke="#00d000"/>
  ${label(x, y, t, size, 0, "#fff", "middle", "axis")}`;

const siteDrawing = () => svg`
  ${seg("M1775 166V761M1826 166V761", "#004d00", 2)}
  ${seg("M1745 352H1801M1808 352h1M1815 352H1884M1745 437H1884M1748 638H1884M1905 638h2M1913 638H1920", "#aaa")}
  ${seg("M1745 761H1884", "#777", 2)}
  ${seg("M1791 437h15M1791 761h15M1816 638h14M1770 433l10 8M1770 634l10 8M1770 757l10 8M1821 757l10 8", "#0a7a0a")}
  ${seg("M1900 166V761", "#00b400", 2)}
  ${seg("M1874 437H1907M1874 638H1890M1871 761H1920", "#008000")}
  ${seg("M1752 166V180M1745 177H1752M1752 473V493M1745 490H1752M1752 797V815M1745 813H1755", "#00c000")}
  ${seg("M1745 338H1757M1745 390H1752V465H1745M1745 714H1752V788H1745", "#a8a000", 1)}
  ${seg("M1757 293V349M1749 357V404M1749 681V727", "#999")}
  ${label(1758, 299, "CT1a", 10, 0, "#fff", "start", "small")}${label(1757, 315, "筏H=-3.400", 9, 0, "#f00", "start", "small")}
  ${label(1750, 363, "CT4", 10, 0, "#fff", "start", "small")}${label(1750, 379, "筏H=-3.550", 9, 0, "#f00", "start", "small")}
  ${label(1750, 687, "CT4", 10, 0, "#fff", "start", "small")}${label(1750, 703, "筏H=-3.550", 9, 0, "#f00", "start", "small")}
  ${label(1801, 276, "9500", 18, -90, "#fff", "middle", "axis")}${label(1801, 538, "5900", 18, -90, "#fff", "middle", "axis")}
  ${label(1801, 699, "3600", 18, -90, "#fff", "middle", "axis")}
  ${label(1891, 400, "2500", 9, -90, "#fff", "middle", "small")}${label(1891, 542, "5900", 9, -90, "#fff", "middle", "small")}
  ${label(1891, 704, "3600", 9, -90, "#fff", "middle", "small")}
  ${axisBubble(1889, 437, 11, "B", 16)}${axisBubble(1889, 638, 11, "1/A", 16)}${axisBubble(1889, 761, 11, "A", 16)}
  ${seg("M771 960V974L767 979M785 960V974L790 979M1098 960V974M1411 960V974M1724 960V974", "#00b400")}
  ${seg("M931 960V974", "#999")}
  ${axisBubble(755, 991, 16, "8", 20)}${axisBubble(801, 991, 16, "9", 20)}${axisBubble(934, 991, 16, "2/9", 12)}
  ${axisBubble(1098, 991, 16, "10", 14)}${axisBubble(1410, 991, 16, "11", 14)}${axisBubble(1724, 991, 16, "12", 14)}
  <circle cx="548" cy="959" r="6" fill="#00c"/>
  <path d="M566 960l9 2-9 3zM584 960l-4 6M584 960l4 6" fill="#f00" stroke="#f00"/>`;

const penguin = (cls: string) => html`<svg class=${cls} viewBox="0 0 28 32" aria-hidden="true">
  <ellipse cx="14" cy="20" rx="12" ry="9" fill="#111"/><ellipse cx="14" cy="10" rx="8" ry="9" fill="#111"/>
  <ellipse cx="14" cy="21" rx="8" ry="8" fill="#fff"/><ellipse cx="8" cy="30" rx="5" ry="2" fill="#f5a81c"/><ellipse cx="20" cy="30" rx="5" ry="2" fill="#f5a81c"/>
  <path d="M5 14q9 5 18 0v4q-9 4-18 0z" fill="#e3202a"/><path d="M7 17h4v7H7z" fill="#e3202a"/>
  <ellipse cx="11" cy="7" rx="2" ry="3" fill="#fff"/><ellipse cx="17" cy="7" rx="2" ry="3" fill="#fff"/><circle cx="12" cy="7" r="1" fill="#111"/><circle cx="16" cy="7" r="1" fill="#111"/>
  <ellipse cx="14" cy="12" rx="5" ry="2" fill="#f5a81c"/></svg>`;

const tLogo = (cls: string) => html`<svg class=${cls} viewBox="0 0 32 32" aria-hidden="true">
  <defs><linearGradient id="tl" x1="0" y1="0" x2="0" y2="1"><stop offset="0" stop-color="#3fc0f7"/><stop offset="1" stop-color="#1a63e0"/></linearGradient></defs>
  <rect width="32" height="32" rx="7" fill="url(#tl)"/><path d="M8 3v26M24 3v26M3 10h26M3 22h26" stroke="#fff" stroke-opacity=".2"/>
  <path d="M6 9q10-5 20 0l-1 4q-3-1-6-1l1 14q-4 2-7 0l1-14q-3 0-7 1z" fill="#fff" fill-opacity=".95"/></svg>`;

@customElement("app-root")
export class AppRoot extends LitElement {
  static styles = css`
    :host { display: block; height: 100vh; overflow: hidden; position: relative; background: #fff; color: #1a1a1a;
      font: 12px/16px "Noto Sans", "Noto Sans CJK SC", sans-serif; }
    * { box-sizing: border-box; }
    button, input, select { font: inherit; color: inherit; margin: 0; padding: 0; border: 0; background: none; border-radius: 0; }
    button { display: flex; align-items: center; white-space: nowrap; }
    ul { list-style: none; margin: 0; padding: 0; }
    .ic { width: 16px; height: 16px; flex: none; display: block; }
    .caret { width: 8px; height: 8px; flex: none; display: block; }
    .shell { display: flex; flex-direction: column; height: 100%; }

    .head { display: flex; height: 42px; flex: none; border-bottom: 1px solid #d5d5d5; }
    .logo { width: 46px; display: flex; align-items: center; justify-content: center; border-right: 1px solid #e8e8e8; }
    .logoimg { width: 28px; height: 28px; }
    .headmain { flex: 1; min-width: 0; display: flex; flex-direction: column; }
    .toprow { display: grid; grid-template-columns: 1fr auto 1fr; height: 22px; align-items: center; padding-right: 11px; }
    .qat { display: flex; gap: 7px; padding-left: 8px; }
    .title { margin: 0; font-size: 12px; font-weight: 400; padding-right: 38px; }
    .wins { display: flex; justify-content: flex-end; gap: 19px; color: #555; }
    .tabrow { display: flex; height: 19px; align-items: center; padding-left: 3px; }
    .tab { height: 19px; padding: 0 13px; }
    .tab.on { background: #56a3f7; color: #fff; }
    .userbar { margin-left: auto; display: flex; align-items: center; gap: 5px; padding-right: 5px; }
    .ask { display: flex; align-items: center; width: 245px; height: 17px; border: 1px solid #c4c4c4; color: #bbb; padding: 0 5px 0 2px; }
    .ask input { flex: 1; min-width: 0; outline: 0; line-height: 14px; }
    .ask input::placeholder, .find input::placeholder { color: #888; opacity: 1; }
    .ask input::placeholder { color: #bbb; }
    .user { padding: 0 6px 0 23px; }

    .ribbon { display: flex; height: 97px; flex: none; padding: 2px 0; background: linear-gradient(#fff 40%, #e6eaeb); border-bottom: 1px solid #8c9196; }
    .group { display: flex; gap: 11px; padding: 0 10px 0 9px; border-right: 1px solid #d8dadc; }
    .group.first { padding-left: 8px; flex-direction: column; gap: 0; }
    .group.spread { padding-right: 18px; }
    .group.inset { padding-left: 16px; }
    .group.inset .bigtop { padding-right: 2px; }
    .firstrow { display: flex; gap: 6px; }
    .gname { justify-content: center; gap: 4px; padding-top: 4px; }
    .col { display: flex; flex-direction: column; }
    .gap { width: 4px; }
    .cmd { height: 23px; gap: 3px; }
    .cmd.off { color: #a6a6a6; }
    .bigsel { flex-direction: column; width: 39px; height: 67px; padding-top: 2px; gap: 5px; background: #c8daf0; margin-top: 2px; }
    .big { width: 30px; height: 32px; display: block; }
    .bigtop { align-self: flex-start; padding-top: 4px; }

    .band { display: flex; height: 27px; flex: none; background: #c9ccd0; border-bottom: 1px solid #a9acb0; padding: 2px; gap: 1px; }
    .sel { position: relative; display: flex; align-items: center; background: #fff; border: 1px solid #a0a0a0; }
    .sel select { appearance: none; width: 100%; height: 100%; padding: 0 16px 0 3px; outline: 0; }
    .sel .caret { position: absolute; right: 4px; pointer-events: none; }
    .sel.wide { width: 100px; }

    .work { flex: 1; min-height: 0; display: flex; background: #f0f0f0; }
    .side { width: 210px; border-right: 1px solid #b8b8b8; display: flex; flex-direction: column; background: #fff; margin-right: 4px; overflow: hidden; border-left: 1px solid #b8b8c0; }
    .strip { height: 12px; background: #d3d4da; flex: none; }
    .strip.thin { height: 9px; }
    .attrs .strip { height: 10px; }
    .phead { height: 22px; flex: none; background: #eee; color: #777; padding-left: 8px; display: flex; align-items: center; border-top: 1px solid #c5c8cf; border-bottom: 1px solid #b8bbc2; margin: 0; font-size: 12px; font-weight: 400; }
    .phead.tall { height: 23px; }
    .tools { display: flex; height: 29px; flex: none; background: #f0f0f0; align-items: center; padding-left: 6px; border-bottom: 1px solid #b8bbc2; }
    .lv { margin-left: 133px; border: 1px solid #56a3f7; border-radius: 2px; padding: 2px 4px; background: #eef5fd; }
    .tree { flex: 1; min-height: 0; overflow: hidden; padding-top: 2px; background: #fff; }
    .comps .tree { padding-top: 1px; }
    .node { height: 24px; display: flex; align-items: center; padding-left: 2px; }
    .node button { height: 21px; gap: 5px; }
    .node.kid { padding-left: 40px; }
    .node.kid button { width: 97px; padding-left: 3px; gap: 6px; }
    .node.on button { background: #c8d9f0; }
    .dlg .node.on button { background: #b2ccee; }
    .vip { background: #ffd966; color: #b8860b; font: 700 8px/10px "Liberation Serif", serif; padding: 0 8px; margin-left: 5px; }

    .props0 { width: 280px; display: flex; flex-direction: column; justify-content: flex-end; background: #f0f0f0; }
    .props0 table { border-collapse: collapse; width: 100%; background: #fff; }
    .props0 td { border: 1px solid #d0d0d0; height: 21px; padding: 0 4px; }
    .props0 td.num { width: 23px; background: #f0f0f0; }
    .props0 td.nm { width: 100px; white-space: nowrap; }
    .props0 td.ro { background: #ebebeb; }
    .props0 td.end { width: 16px; }
    .props0 td.add { width: 41px; }
    .foot0 { height: 30px; padding: 3px 6px; }
    .pbtn { width: 80px; height: 23px; justify-content: center; background: #fff; border: 1px solid #c8c8c8; border-radius: 3px; }
    .site { flex: 1; min-width: 0; background: #000; position: relative; border-left: 4px solid #fff; }
    .draw { display: block; width: 100%; height: 100%; }
    .cad { font-family: "Liberation Serif", "Noto Sans CJK SC", serif; font-weight: 300; }
    .cadmono { font-family: "Liberation Mono", monospace; font-weight: 300; }
    .axis { font-family: "Noto Sans", "Noto Sans CJK SC", sans-serif; }
    .small { font-family: "Liberation Sans", "Noto Sans CJK SC", sans-serif; }
    .viewbar { position: absolute; right: 0; top: 0; width: 33px; height: 226px; background: #97999e; border: 1px solid #b5b7ba; border-radius: 3px; }
    .viewbar svg { display: block; width: 31px; height: 224px; }
    .lens { position: absolute; right: 8px; top: 20px; width: 49px; height: 48px; background: #1b4f93; border: 2px solid #7a7a7a; justify-content: center; }
    .lens svg { width: 32px; height: 32px; }

    .status { height: 30px; flex: none; display: flex; align-items: center; background: #dedee0; padding: 0 36px 0 2px; color: #333; white-space: nowrap; }
    .st1 { width: 263px; } .st2 { width: 83px; } .st3 { width: 133px; } .st4 { width: 103px; } .st5 { width: 103px; }
    .sbtns { display: flex; gap: 3px; padding-right: 6px; }
    .sb { height: 24px; border: 1px solid #a0a0a4; background: #d0d0d2; padding: 0 4px; gap: 2px; }
    .sb.txt { padding: 0 5px; }
    .sb.on { background: #fff; border-color: #3b95ea; }
    .sb.m { margin-right: 3px; }
    .fps { margin-left: auto; }

    .task { height: 39px; flex: none; display: flex; align-items: center; color: #fff; border-top: 1px solid #3a332c; padding-left: 8px;
      background: linear-gradient(90deg, #352a24 0, #4b3c31 10%, #5d5148 25%, #50433a 37%, #6f6757 45%, #6a6355 52%, #a08e79 60%, #a39580 68%, #7d705b 77%, #6a594a 84%, #3c322d 90%, #2b2624 100%); }
    .orb { width: 38px; height: 38px; }
    .grip { width: 9px; height: 30px; margin: 0 11px; background-image: radial-gradient(circle, #1d1712 1px, transparent 1px); background-size: 3px 3px; }
    .app { width: 58px; height: 38px; justify-content: center; border: 1px solid #c8c0b8; border-radius: 3px; background: linear-gradient(160deg, #a39a92, #5d534b 60%, #4a4038); }
    .app.plain { border-color: transparent; background: none; width: 65px; }
    .app.lit { background: linear-gradient(150deg, #d5d1cd, #948c86 50%, #a8a098); }
    .app + .app { margin-left: 4px; }
    .app.plain, .app.plain + .app { margin-left: 0; }
    .app svg { width: 32px; height: 32px; }
    .app svg.qq { width: 28px; height: 32px; }
    .tray { margin-left: auto; display: flex; align-items: center; height: 100%; }
    .tray svg { width: 16px; height: 20px; flex: none; }
    .tray svg.slim { width: 8px; }
    .tray svg.mid10 { width: 10px; }
    .ch { font-size: 11px; padding-right: 8px; }
    .ta { font: 18px/20px "Liberation Serif", serif; padding: 0 8px 0 5px; }
    .tray > .tic { margin-right: 8px; }
    .clock { text-align: center; line-height: 18px; width: 72px; margin: 0 4px 0 0; }
    .peek { width: 15px; height: 38px; border: 1px solid #77706a; background: linear-gradient(90deg, #5a544f, #2a2624); }

    .net { position: absolute; right: 15px; bottom: 51px; display: flex; align-items: center; color: #fff; }
    .speeds { width: 88px; height: 41px; border-radius: 20px 0 0 20px; background: #20242f; padding: 0 0 0 10px; margin-right: -28px; display: flex; flex-direction: column; justify-content: center; }
    .speeds span { display: flex; align-items: center; gap: 5px; line-height: 20px; }
    .speeds small { font-size: 9px; color: #8d93a0; margin-left: -4px; }
    .up { color: #3ba7e8; } .down { color: #38c04a; }
    .gauge { width: 58px; height: 58px; position: relative; }

    .dlg { position: absolute; left: 176px; right: 175px; top: 77px; bottom: 118px; display: flex; flex-direction: column; background: #f0f0f0; border: 1px solid #c0c4cc; border-top: 0; }
    .dtitle { height: 27px; flex: none; background: #2d7fe0; color: #fff; display: flex; align-items: center; padding: 0 5px 0 7px; }
    .dtitle h2 { margin: 0; font-size: 12px; font-weight: 400; flex: 1; }
    .dwins { display: flex; gap: 12px; }
    .dbar { height: 30px; flex: none; background: #fff; border-top: 1px solid #c5c8cf; border-bottom: 1px solid #c5c8cf; display: flex; align-items: center; padding-left: 1px; }
    .dbar .sel { width: 100px; height: 25px; margin-right: 4px; }
    .dbtn { height: 24px; gap: 4px; padding: 0 4px 0 6px; border-left: 1px solid transparent; color: #333; }
    .dbtn + .dbtn { padding-left: 5px; }
    .dbtn.sep, .dbtn + .dbtn.sep { border-left-color: #d8d8d8; margin-left: 4px; padding-left: 8px; }
    .dbody { flex: 1; min-height: 0; display: grid; grid-template-columns: 148px 348px 1fr; gap: 4px; }
    .pane { display: flex; flex-direction: column; min-width: 0; min-height: 0; border-right: 1px solid #a9abb0; background: #fff; }
    .mid { display: flex; flex-direction: column; gap: 4px; min-height: 0; }
    .comps { flex: 452 1 0; border: 1px solid #b0b2b6; border-top: 0; }
    .attrs { flex: 371 1 0; overflow: hidden; border-left: 1px solid #b0b2b6; }
    .ctools { height: 28px; flex: none; display: flex; align-items: center; gap: 11px; padding-left: 4px; border-bottom: 1px solid #c5c8cf; color: #333; }
    .ctools button { gap: 4px; }
    .ctools button:first-child { margin-right: -3px; }
    .find { height: 21px; flex: none; display: flex; align-items: center; border-top: 1px solid #a9abb0; border-bottom: 2px solid #b0b2b6; padding: 0 4px 0 2px; color: #4aa0d0; }
    .find input { flex: 1; outline: 0; }
    .cnode { height: 24px; display: flex; align-items: center; font-size: 13px; color: #000; }
    .cnode.l1 { padding-left: 9px; font-size: 12px; } .cnode.l2 { padding-left: 29px; } .cnode.l3 { padding-left: 60px; }
    .cnode button { height: 21px; gap: 5px; }
    .cnode.on button { background: #b2ccee; }
    .cnode.l3 button { width: 89px; }
    .attwrap { display: flex; flex: 1; min-height: 0; overflow: hidden; align-items: flex-start; }
    .attrs table { flex: none; border-collapse: collapse; table-layout: fixed; width: 330px; color: #000; }
    .attrs th, .attrs td { border: 1px solid #cfcfcf; border-left: 0; border-top: 0; height: 21px; padding: 0 3px; font-weight: 400; overflow: hidden; white-space: nowrap; line-height: 16px; }
    .attrs thead th, .attrs tbody th { background: #f0f0f0; color: #333; text-align: center; padding: 0; }
    .attrs td.nm { color: #1d62f0; }
    .attrs td.nm.k { color: #000; }
    .attrs td.ro { background: #ebebeb; color: #8c8c8c; }
    .attrs td.ck { text-align: center; }
    .attrs input { appearance: none; width: 14px; height: 14px; border: 1px solid #808080; border-radius: 2px; display: block; margin: auto; background: #fff; }
    .c1 { width: 22px; } .c2 { width: 101px; } .c3 { width: 167px; } .c4 { width: 40px; }
    .exp { display: inline-flex; width: 11px; height: 11px; border: 1px solid #555; border-radius: 2px; align-items: center; justify-content: center; font-size: 10px; line-height: 9px; margin-right: 7px; vertical-align: 1px; }
    .vbar { width: 16px; align-self: stretch; padding: 14px 4px 51px; background: #fff; }
    .thumb { height: 100%; width: 8px; border-radius: 4px; background: #cdcdcd; }

    .param { display: flex; flex-direction: column; min-width: 0; min-height: 0; }
    .ptabs { height: 23px; display: flex; background: #eee; border-top: 1px solid #c5c8cf; border-bottom: 1px solid #c5c8cf; flex: none; }
    .ptabs button { padding: 0 8px; height: 21px; border-right: 1px solid #c5c8cf; }
    .ptabs .off { background: #e1e1e1; color: #888; }
    .ptabs .sel1 { font-weight: 500; }
    .pform { height: 32px; flex: none; background: #fff; display: flex; align-items: flex-start; color: #000; }
    .pform label { display: flex; align-items: center; gap: 4px; height: 25px; margin-right: 6px; }
    .pform input { appearance: none; width: 14px; height: 14px; border: 1px solid #8a8a8a; border-radius: 50%; background: #fff; margin-left: 1px; }
    .pform input:checked { background: radial-gradient(circle, #3d8ff0 3px, #fff 4px); }
    .form { margin-left: auto; width: 80px; height: 26px; background: #2d7fe0; color: #fff; border-radius: 3px; justify-content: center; }
    .board { flex: 1; min-height: 0; background: #000; }
    .dfoot { height: 11px; flex: none; display: flex; justify-content: flex-end; }
    .dfoot svg { width: 10px; height: 10px; }
  `;

  private cmds(cols: Cmd[][]) {
    return cols.map((c) => html`<div class="col">${c.map(([i, t, f]) => html`
      <button class="cmd ${f === "off" ? "off" : ""}" aria-label=${t || i}>${icon(i)}${t}${f === "v" ? caret : nothing}</button>`)}</div>`);
  }

  private tree(rows: [string, string][]) {
    return html`<ul class="tree">${rows.map(([i, t]) => {
      const kid = i !== "plusdir" && i !== "minusdir";
      return html`<li class=${classMap({ node: true, kid, on: t === "桩承台(V)" })}>
        <button>${icon(i)}${t}</button>${t === "装配式" ? html`<span class="vip">VIP</span>` : nothing}</li>`;
    })}</ul>`;
  }

  private select(id: string, value: string, cls = "") {
    return html`<div class="sel ${cls}"><select id=${id} aria-label=${value}><option>${value}</option></select>${caret}</div>`;
  }

  private header() {
    return html`
      <header class="head">
        <div class="logo">${tLogo("logoimg")}</div>
        <div class="headmain">
          <div class="toprow">
            <div class="qat">
              ${["newdoc", "open", "save"].map((n) => html`<button aria-label=${n}>${icon(n)}</button>`)}
              <button aria-label="undo">${icon("undo")}${caret}</button><button aria-label="redo">${icon("redo")}${caret}</button>
              ${["sigma", "chartfind", "winfind", "glasses", "brush", "mesh", "calcpage"].map((n) => html`<button aria-label=${n}>${icon(n)}</button>`)}
              <button aria-label="more">${icon("overflow")}</button>
            </div>
            <h1 class="title">广联达BIM土建计量平台 GTJ2018 - [C:\\Users\\Administrator\\Desktop\\旭东5#.GTJ]</h1>
            <div class="wins">${["min", "restore", "close"].map((n) => html`<button aria-label=${n}>${icon(n)}</button>`)}</div>
          </div>
          <nav class="tabrow">
            ${["开始", "工程设置", "建模", "视图", "工具", "工程量", "云应用"].map((t) => html`<button class="tab ${t === "建模" ? "on" : ""}">${t}</button>`)}
            <div class="userbar">
              <div class="ask"><input aria-label="答疑解惑" placeholder="答疑解惑，搜这里">${icon("search")}</div>
              <span class="user">式微子</span>
              ${["chat", "headset"].map((n) => html`<button aria-label=${n}>${icon(n)}</button>`)}
              <button aria-label="help">${icon("help")}${caret}</button>
              ${["shirt", "collapse"].map((n) => html`<button aria-label=${n}>${icon(n)}</button>`)}
            </div>
          </nav>
        </div>
      </header>
      <div class="ribbon">
        <div class="group first">
          <div class="firstrow">
            <button class="bigsel"><svg class="big" viewBox="0 0 30 30"><path d="M.5.5h29v29H.5z" fill="#e9f2fc" stroke=${B}/><path d="M0 0h30v5H0z" fill=${B}/><path d="M7 27V11h19" fill="none" stroke="#f5a623" stroke-dasharray="3 2"/><path d="M20 17v12l3-3 2 4 2-1-2-4h4z" fill=${B}/></svg>选择</button>
            ${this.cmds(G1)}
          </div>
          <button class="gname">选择 ${caret}</button>
        </div>
        <div class="group spread">${this.cmds(G2)}</div>
        <div class="group">${this.cmds(G3)}</div>
        <div class="group">${this.cmds(G4)}</div>
        <div class="group">
          <button class="bigtop" aria-label="point"><svg class="big" viewBox="0 0 30 32"><path d="M15 0v32M0 15h30" stroke="#7f8b95"/><circle cx="15" cy="15" r="3.500" fill=${B}/></svg></button>
          <button class="bigtop" aria-label="line"><svg class="big" viewBox="0 0 30 32"><path d="M4 28L26 4" stroke="#999"/><path d="M1 27h4v4H1zM25 1h4v4h-4z" fill="#fff" stroke="#777"/></svg></button>
          <div class="col">
            <button class="cmd" aria-label="arc"><svg class="ic" viewBox="0 0 16 16"><path d="M2 14C2 7 7 3 14 3" fill="none" stroke="#999"/><path d="M.5 12.500h3v3h-3zM12.500 1.500h3v3h-3z" fill="#fff" stroke="#777"/></svg></button>
            <button class="cmd" aria-label="circle"><svg class="ic" viewBox="0 0 16 16"><circle cx="8" cy="8" r="7" fill="none" stroke="#999"/><path d="M8 8l5-5" stroke="#999"/></svg></button>
          </div>
        </div>
        <div class="group inset">
          <button class="bigtop" aria-label="pile cap"><svg class="big" viewBox="0 0 30 32"><path d="M2.500 4.500h25v6h-25z" fill="#9cc2ee" stroke=${B}/><path d="M5.500 10.500v17h4v-17M20.500 10.500v12h4v-12" fill="#eaf3fd" stroke=${B}/><path d="M20 20v11l3-3 4 0z" fill="#f0906a"/></svg></button>
          ${this.cmds([[["checkcap", "校核承台图元"]]])}
        </div>
        <div class="group inset">
          <button class="bigtop" aria-label="smart grid"><svg class="big" viewBox="0 0 30 32"><path d="M1 7.500h28M1 16.500h28M1 24.500h28M8.500 2v30M15.500 2v30M22.500 2v30" stroke=${B}/><path d="M.500 6h2v3h-2zM.500 15h2v3h-2zM.500 23h2v3h-2z" fill="#fff" stroke=${B}/><path d="M14 18l11 13" stroke="#e8b27a" stroke-width="3"/><path d="M12 14v6M9 17.500h6M21 18v4M10 24v4M8 26h4" stroke=${O}/></svg></button>
          ${this.cmds(G7)}
          <div class="gap"></div>
          ${this.cmds([[["annotate", "查改标注", "v"]]])}
        </div>
      </div>
      <div class="band">${this.select("floor", "基础层", "wide")}${this.select("kind", "基础", "wide")}</div>`;
  }

  private workspace() {
    return html`<div class="work">
      <aside class="side">
        <div class="strip"></div>
        <h3 class="phead">导航树</h3>
        <div class="tools"><button aria-label="expand">${icon("pluses")}</button><button class="lv" aria-label="list">${icon("listview")}</button></div>
        ${this.tree(LEFT_TREE)}
      </aside>
      <section class="props0">
        <table><tr><td class="num">21</td><td class="nm"><span class="exp">+</span>土建业务属性</td><td class="ro"></td><td class="add"></td><td class="end"></td></tr></table>
        <div class="foot0"><button class="pbtn">参数图</button></div>
      </section>
      <section class="site">
        <svg class="draw" viewBox="498 166 1422 845" preserveAspectRatio="xMaxYMid meet">${siteDrawing()}</svg>
        <div class="viewbar"><svg viewBox="0 0 31 224">
          <ellipse cx="16" cy="18" rx="10" ry="7" fill="#c9d4e2" stroke="#556"/><circle cx="25" cy="17" r="4" fill="#e8eef5" stroke="#556"/>
          <path d="M4 44h15v12H4zM4 44l6-6h16v12l-7 6" fill="#8fa2ba" stroke="#334"/>
          <path d="M4 75l6-6h16l-3 3v14l-4 6H4z" fill="#cfe4fb" stroke="#334"/><path d="M4 75h16l6-6v15l-6 7V75M10 69v16h16M10 85l-6 6" fill="none" stroke="#334"/>
          <path d="M12 99h8l-4 3z" fill="#334"/>
          <path d="M4 114l6-6h16v15l-6 7H4z" fill="#7f93ae" stroke="#334"/><path d="M4 114h16l6-6M20 114v16" fill="none" stroke="#334"/>
          <path d="M12 138h8l-4 3z" fill="#334"/>
          <path d="M24 164a10 9 0 11 0-10" fill="none" stroke="#334" stroke-width="2.500"/><path d="M26 148v8h-8z" fill="#334"/>
          <path d="M12 177h8l-4 3z" fill="#334"/><path d="M5 185.500h22" stroke="#556"/>
          <path d="M3.500 193.500l3-3h19l2 3v20h-24z" fill="#8fa2ba" stroke="#334"/><path d="M7 196l1 2 2-3M19 196l1 2 2-3M7 201.500h2M11 201.500h3M7 205.500h2M11 205.500h3M7 209.500h2M11 209.500h3M18 201.500h2M22 201.500h3M18 205.500h2M22 205.500h3M18 209.500h2M22 209.500h3M16 198v14" fill="none" stroke="#223"/>
        </svg></div>
        <button class="lens" aria-label="search"><svg viewBox="0 0 32 32"><ellipse cx="15" cy="15" rx="10" ry="10" fill="none" stroke="#fff" stroke-width="2.500"/><path d="M22 22l5 5" stroke="#fff" stroke-width="2.500"/></svg></button>
      </section>
    </div>`;
  }

  private bottom() {
    return html`
      <footer class="status">
        <span class="st1">X = 84037 Y = -6028</span><span class="st2">层高： 1.7</span><span class="st3">标高： -1.7~0</span><span class="st4">0</span><span class="st5">隐藏：0</span>
        <div class="sbtns">
          <button class="sb" aria-label="ortho">${icon("ortho")}</button>
          <button class="sb on m" aria-label="rectangle">${icon("snaprect")}${caret}</button>
          <button class="sb m" aria-label="cross">${icon("cross")}</button>
          <button class="sb" aria-label="angle">${icon("angle")}${caret}</button>
          <button class="sb" aria-label="input">${icon("plusbar")}${caret}</button>
          <button class="sb txt">跨图层选择</button><button class="sb txt">折线选择</button>
        </div>
        <span>按鼠标左键指定第一个角点，或拾取构件图元</span><span class="fps">100 FPS</span>
      </footer>
      <div class="task">
        <svg class="orb" viewBox="0 0 38 38"><defs><radialGradient id="orbg" cx=".5" cy=".8"><stop offset="0" stop-color="#5fe0ff"/><stop offset=".5" stop-color="#1f76b8"/><stop offset="1" stop-color="#123a5e"/></radialGradient></defs>
          <circle cx="19" cy="19" r="18" fill="url(#orbg)" stroke="#8fb6cc"/><path d="M4 14a16 14 0 0130 0q-15 6-30 0z" fill="#fff" fill-opacity=".3"/>
          <path d="M12 10q4-2 7 0l-2 8q-3-2-7 0z" fill="#f0642d"/><path d="M20 10q4 2 8 0l-2 8q-4 2-8 0z" fill="#8cc63f"/><path d="M10 19q3-2 7 0l-2 8q-4-2-7 0z" fill="#3fa9f5"/><path d="M18 20q4 2 8 0l-2 8q-4 2-8 0z" fill="#ffcb2e"/></svg>
        <span class="grip"></span>
        <button class="app" aria-label="browser"><svg viewBox="0 0 32 32"><circle cx="16" cy="15" r="11" fill="none" stroke="#2b8df0" stroke-width="6"/><path d="M16 4a11 11 0 0111 11" stroke="#35c0f5" stroke-width="6" fill="none"/><path d="M17 30a4 4 0 010-8 5 5 0 018-1 5 5 0 013 9z" fill="#fff"/></svg></button>
        <button class="app plain" aria-label="QQ">${penguin("qq")}</button>
        <button class="app lit" aria-label="GTJ2018">${tLogo("tapp")}</button>
        <button class="app" aria-label="CAD"><svg viewBox="0 0 32 32"><rect x="1" y="1" width="30" height="30" rx="4" fill="#1670cf" stroke="#5da4e8"/><path d="M8 4v24M16 4v24M24 4v24M4 10h24M4 24h24" stroke="#fff" stroke-opacity=".25"/><text x="16" y="21" text-anchor="middle" font-size="13" font-family="Liberation Sans" fill="#fff">CAD</text></svg></button>
        <div class="tray">
          <span class="grip"></span><span class="ch">CH</span>
          <svg viewBox="0 0 16 20"><rect y="2" width="16" height="16" rx="2" fill="#2a86f2"/><circle cx="8" cy="10" r="4" fill="none" stroke="#fff" stroke-width="2.500"/><path d="M12 14h3v3h-3z" fill="#b6f000"/></svg>
          <span class="ta">A</span>
          <svg class="tic slim" viewBox="0 0 8 20"><path d="M1 8h6l-3 3z" fill="#fff"/></svg>
          <svg class="tic" viewBox="0 0 16 20"><circle cx="8" cy="10" r="7" fill="#1226b8" stroke="#ccd"/><text x="8" y="14" text-anchor="middle" font-size="11" font-weight="700" fill="#fff">?</text></svg>
          <svg class="tic mid10" viewBox="0 0 10 20"><path d="M3.500 0.500h5v4h-5zM.500 3.500h5v4h-5z" fill="none" stroke="#fff"/><path d="M2 14h6l-3 3z" fill="#fff"/></svg>
          <svg viewBox="0 0 16 20"><path d="M1 14h8l-4-4z" fill="#fff"/></svg>
          ${penguin("tic")}
          <svg class="tic" viewBox="0 0 16 20"><path d="M1 9h3l4-4v13l-4-4H1z" fill="#fff"/><path d="M10 8q2 3 0 7M12 6q4 5 0 11" fill="none" stroke="#fff"/></svg>
          <div class="clock">14:18<br>2021/11/9</div><div class="peek"></div>
        </div>
      </div>`;
  }

  private dialog() {
    return html`<section class="dlg" role="dialog" aria-label="定义">
      <div class="dtitle"><h2>定义</h2><div class="dwins">${["min", "max", "close"].map((n) => html`<button aria-label=${n}>${icon(n)}</button>`)}</div></div>
      <div class="dbar">
        ${this.select("dfloor", "基础层")}
        <button class="dbtn">${icon("copyfl")}层间复制</button>
        <button class="dbtn">${icon("archive")}存档 ${caret}</button>
        <button class="dbtn">${icon("prefix")}添加前后缀</button>
        <button class="dbtn">${icon("delunused")}删除未使用构件</button>
        <button class="dbtn sep">${icon("checkdo")}检查做法</button>
        <button class="dbtn">${icon("autoset")}自动套方案维护</button>
        <button class="dbtn">${icon("batchdo")}批量自动套做法</button>
      </div>
      <div class="dbody">
        <div class="pane"><div class="strip thin"></div><h3 class="phead tall">导航树</h3>${this.tree(DLG_TREE)}</div>
        <div class="mid">
          <div class="pane comps">
            <div class="strip thin"></div><h3 class="phead tall">构件列表</h3>
            <div class="ctools"><button>${icon("create")}新建 ${caret}</button><button>${icon("copy")}复制</button><button>${icon("remove")}删除</button></div>
            <div class="find"><input aria-label="搜索构件" placeholder="搜索构件...">${icon("search")}</div>
            <ul class="tree">${COMPS.map(([l, t], i) => html`<li class="cnode l${l} ${i === 8 ? "on" : ""}"><button>
              ${l < 3 ? html`<svg class="caret" viewBox="0 0 8 8"><path d="M7 1v6H1z" fill="#333"/></svg>` : nothing}${t}</button></li>`)}</ul>
          </div>
          <div class="pane attrs">
            <div class="strip thin"></div><h3 class="phead tall">属性列表</h3>
            <div class="attwrap">
              <table>
                <colgroup><col class="c1"><col class="c2"><col class="c3"><col class="c4"></colgroup>
                <thead><tr><th></th><th>属性名称</th><th>属性值</th><th>附加</th></tr></thead>
                <tbody>${PROPS.map(([n, v, f], i) => html`<tr><th>${i + 1}</th>
                  <td class="nm ${f.includes("k") ? "k" : ""}">${f.includes("p") ? html`<span class="exp">+</span>` : nothing}${n}</td>
                  <td class=${f.includes("g") ? "ro" : ""}>${v}</td>
                  <td class="ck">${f.includes("c") ? html`<input type="checkbox" aria-label=${n}>` : nothing}</td></tr>`)}</tbody>
              </table>
              <div class="vbar"><div class="thumb"></div></div>
            </div>
          </div>
        </div>
        <div class="param">
          <div class="strip thin"></div>
          <div class="ptabs"><button class="sel1">参数图</button><button class="off">构件做法</button></div>
          <div class="pform">
            <label><input type="radio" name="slope" checked>角度放坡形式</label>
            <label><input type="radio" name="slope">底宽放坡形式</label>
            <button class="form">配筋形式</button>
          </div>
          <div class="board"><svg class="draw" viewBox="681 198 1063 752">${planDrawing()}${sectionDrawing()}</svg></div>
          <div class="dfoot"><svg viewBox="0 0 10 10"><path d="M6 1h2v2H6zM3 4h2v2H3zM6 4h2v2H6zM0 7h2v2H0zM3 7h2v2H3zM6 7h2v2H6z" fill="#7a8088"/></svg></div>
        </div>
      </div>
    </section>`;
  }

  render() {
    return html`<div class="shell">${this.header()}${this.workspace()}${this.bottom()}</div>
      ${this.dialog()}
      <div class="net">
        <div class="speeds"><span><b class="up">↑</b>0.1 <small>K/s</small></span><span><b class="down">↓</b>0.7 <small>K/s</small></span></div>
        <svg class="gauge" viewBox="0 0 58 58"><circle cx="29" cy="29" r="28" fill="#343b4b" stroke="#565d6c"/>
          <path d="M29 4a25 25 0 0118 43" fill="none" stroke="#3cc7b4" stroke-width="2"/><path d="M47 47a25 25 0 01-27 5" fill="none" stroke="#b8d94a" stroke-width="2"/><path d="M20 52A25 25 0 014 29" fill="none" stroke="#e0a94a" stroke-width="2"/>
          <text x="26" y="37" text-anchor="middle" font-size="23" font-weight="300" fill="#fff">77</text><text x="44" y="38" text-anchor="middle" font-size="9" fill="#fff">%</text></svg>
      </div>`;
  }
}
